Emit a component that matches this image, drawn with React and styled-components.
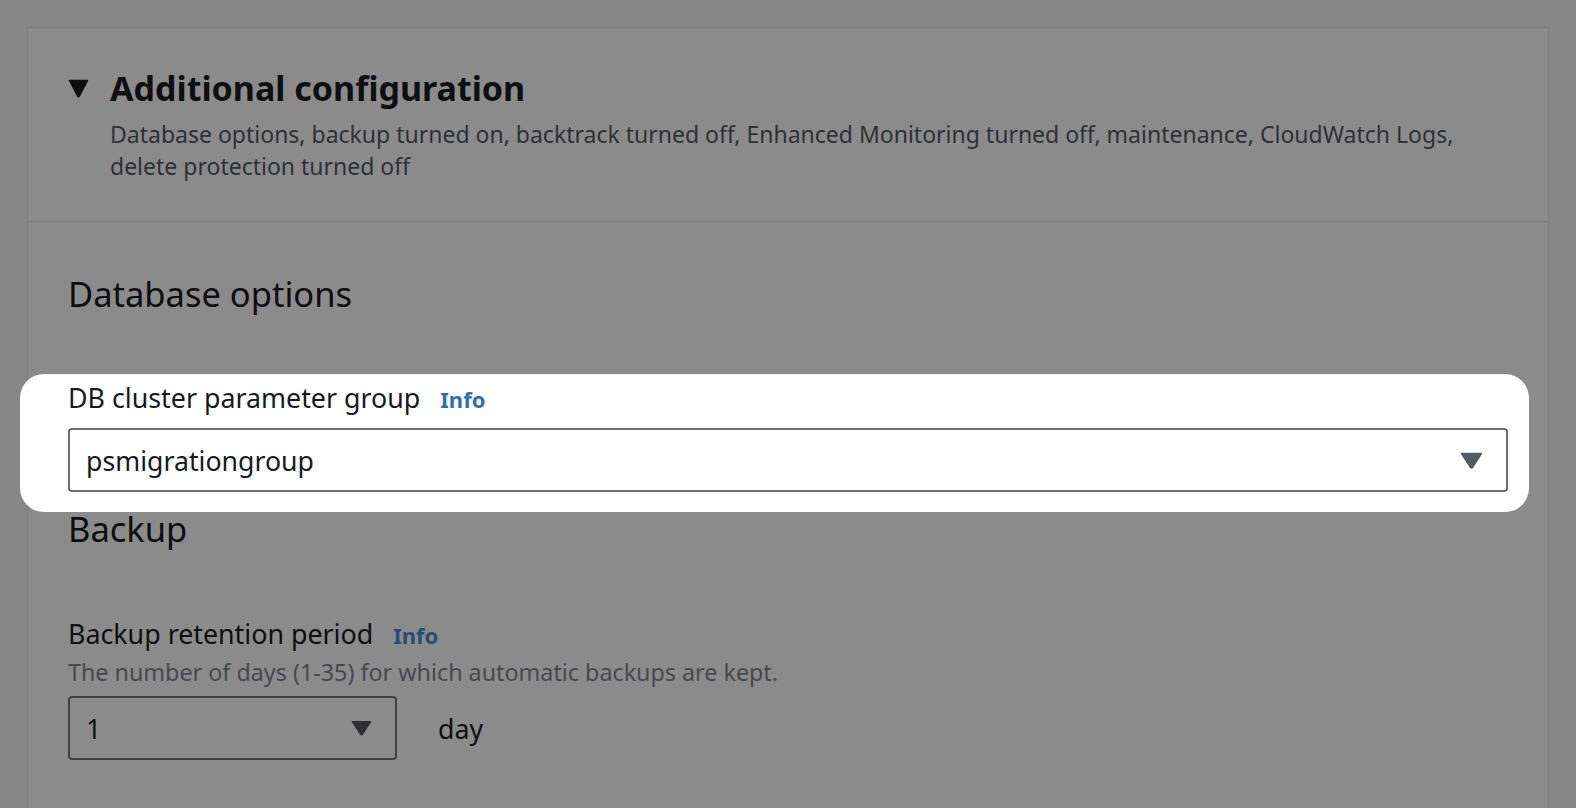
import React from "react";
import styled, { createGlobalStyle } from "styled-components";

const Global = createGlobalStyle`
  html, body { margin: 0; padding: 0; }
  body {
    background: #878787;
    font-family: "Noto Sans", "Open Sans", sans-serif;
    overflow: hidden;
    width: 1576px;
    height: 808px;
  }
`;

const Page = styled.div`
  padding: 27px 27px 0 27px;
  height: 781px;
  overflow: hidden;
`;

const Card = styled.section`
  background: #8b8b8b;
  border: 1px solid #7e7e7e;
  border-bottom: none;
  min-height: 900px;
`;

const Header = styled.header`
  display: flex;
  align-items: flex-start;
  gap: 21px;
  padding: 40px 40px 39px 40px;
  border-bottom: 1px solid #7f7f7f;
`;

const Caret = styled.svg`
  flex: none;
  width: 21px;
  height: 19px;
  margin-top: 11px;
`;

const HeadText = styled.div`
  display: flex;
  flex-direction: column;
  gap: 10px;
`;

const Title = styled.h2`
  margin: 0;
  font-size: 34px;
  line-height: 40px;
  font-weight: 700;
  color: #0e0f11;
`;

const Summary = styled.p`
  margin: 0;
  font-size: 23px;
  line-height: 32px;
  color: #2f3135;
`;

const Body = styled.div`
  display: flex;
  flex-direction: column;
  padding: 50px 40px 0 40px;
`;

const SectionTitle = styled.h3`
  margin: ${(p) => p.$mt || 0}px 0 0 0;
  font-size: 34.5px;
  line-height: ${(p) => p.$lh || 44}px;
  font-weight: 400;
  color: #0d0e10;
`;

const Spotlight = styled.div`
  margin: 58px -21px 0 -48px;
  padding: 8px 21px 20px 48px;
  background: #ffffff;
  border-radius: 24px;
  display: flex;
  flex-direction: column;
  gap: 13px;
`;

const Field = styled.div`
  display: flex;
  flex-direction: column;
  margin-top: ${(p) => p.$mt || 0}px;
`;

const LabelRow = styled.div`
  display: flex;
  align-items: baseline;
  gap: 20px;
  font-size: 26.8px;
  line-height: 32px;
  color: ${(p) => (p.$dim ? "#0e0f11" : "#16191f")};
`;

const Info = styled.span`
  font-size: 22px;
  font-weight: 700;
  color: ${(p) => (p.$dim ? "#284c76" : "#2e6fb4")};
`;

const Hint = styled.div`
  margin-top: 7px;
  font-size: 23.3px;
  line-height: 28px;
  color: #46494e;
`;

const SelectRow = styled.div`
  display: flex;
  align-items: center;
  gap: 41px;
  margin-top: 10px;
`;

const Select = styled.div`
  box-sizing: border-box;
  display: flex;
  align-items: center;
  justify-content: space-between;
  height: 64px;
  width: ${(p) => p.$w || "100%"};
  padding: 0 23px 0 16px;
  border: 2px solid ${(p) => (p.$dim ? "#404040" : "#6b6f74")};
  border-radius: 4px;
  background: ${(p) => (p.$dim ? "transparent" : "#ffffff")};
  font-size: 26.7px;
  color: ${(p) => (p.$dim ? "#0e0f11" : "#16191f")};
`;

const Unit = styled.span`
  font-size: 26.7px;
  color: #0e0f11;
`;

const Tri = ({ color, w = 23, h = 17 }) => (
  <svg width={w} height={h} viewBox="0 0 23 17">
    <path d="M1.5 1.5 H21.5 L12.6 15.3 Q11.5 16.8 10.4 15.3 Z" fill={color} stroke={color} strokeWidth="1.5" strokeLinejoin="round" />
  </svg>
);

export default function App() {
  return (
    <>
      <Global />
      <Page>
        <Card>
          <Header>
            <Caret viewBox="0 0 21 19">
              <path d="M1.5 1.5 H19.5 L11.4 17 Q10.5 18.3 9.6 17 Z" fill="#0e0f11" stroke="#0e0f11" strokeWidth="1.5" strokeLinejoin="round" />
            </Caret>
            <HeadText>
              <Title>Additional configuration</Title>
              <Summary>
                Database options, backup turned on, backtrack turned off, Enhanced Monitoring turned off, maintenance, CloudWatch Logs,
                <br />
                delete protection turned off
              </Summary>
            </HeadText>
          </Header>
          <Body>
            <SectionTitle>Database options</SectionTitle>
            <Spotlight>
              <LabelRow>
                DB cluster parameter group <Info>Info</Info>
              </LabelRow>
              <Select>
                <span>psmigrationgroup</span>
                <Tri color="#545b64" />
              </Select>
            </Spotlight>
            <SectionTitle $lh={34}>Backup</SectionTitle>
            <Field $mt={72}>
              <LabelRow $dim>
                Backup retention period <Info $dim>Info</Info>
              </LabelRow>
              <Hint>The number of days (1-35) for which automatic backups are kept.</Hint>
              <SelectRow>
                <Select $dim $w="329px">
                  <span>1</span>
                  <Tri color="#2e3033" w={21} h={16} />
                </Select>
                <Unit>day</Unit>
              </SelectRow>
            </Field>
          </Body>
        </Card>
      </Page>
    </>
  );
}
